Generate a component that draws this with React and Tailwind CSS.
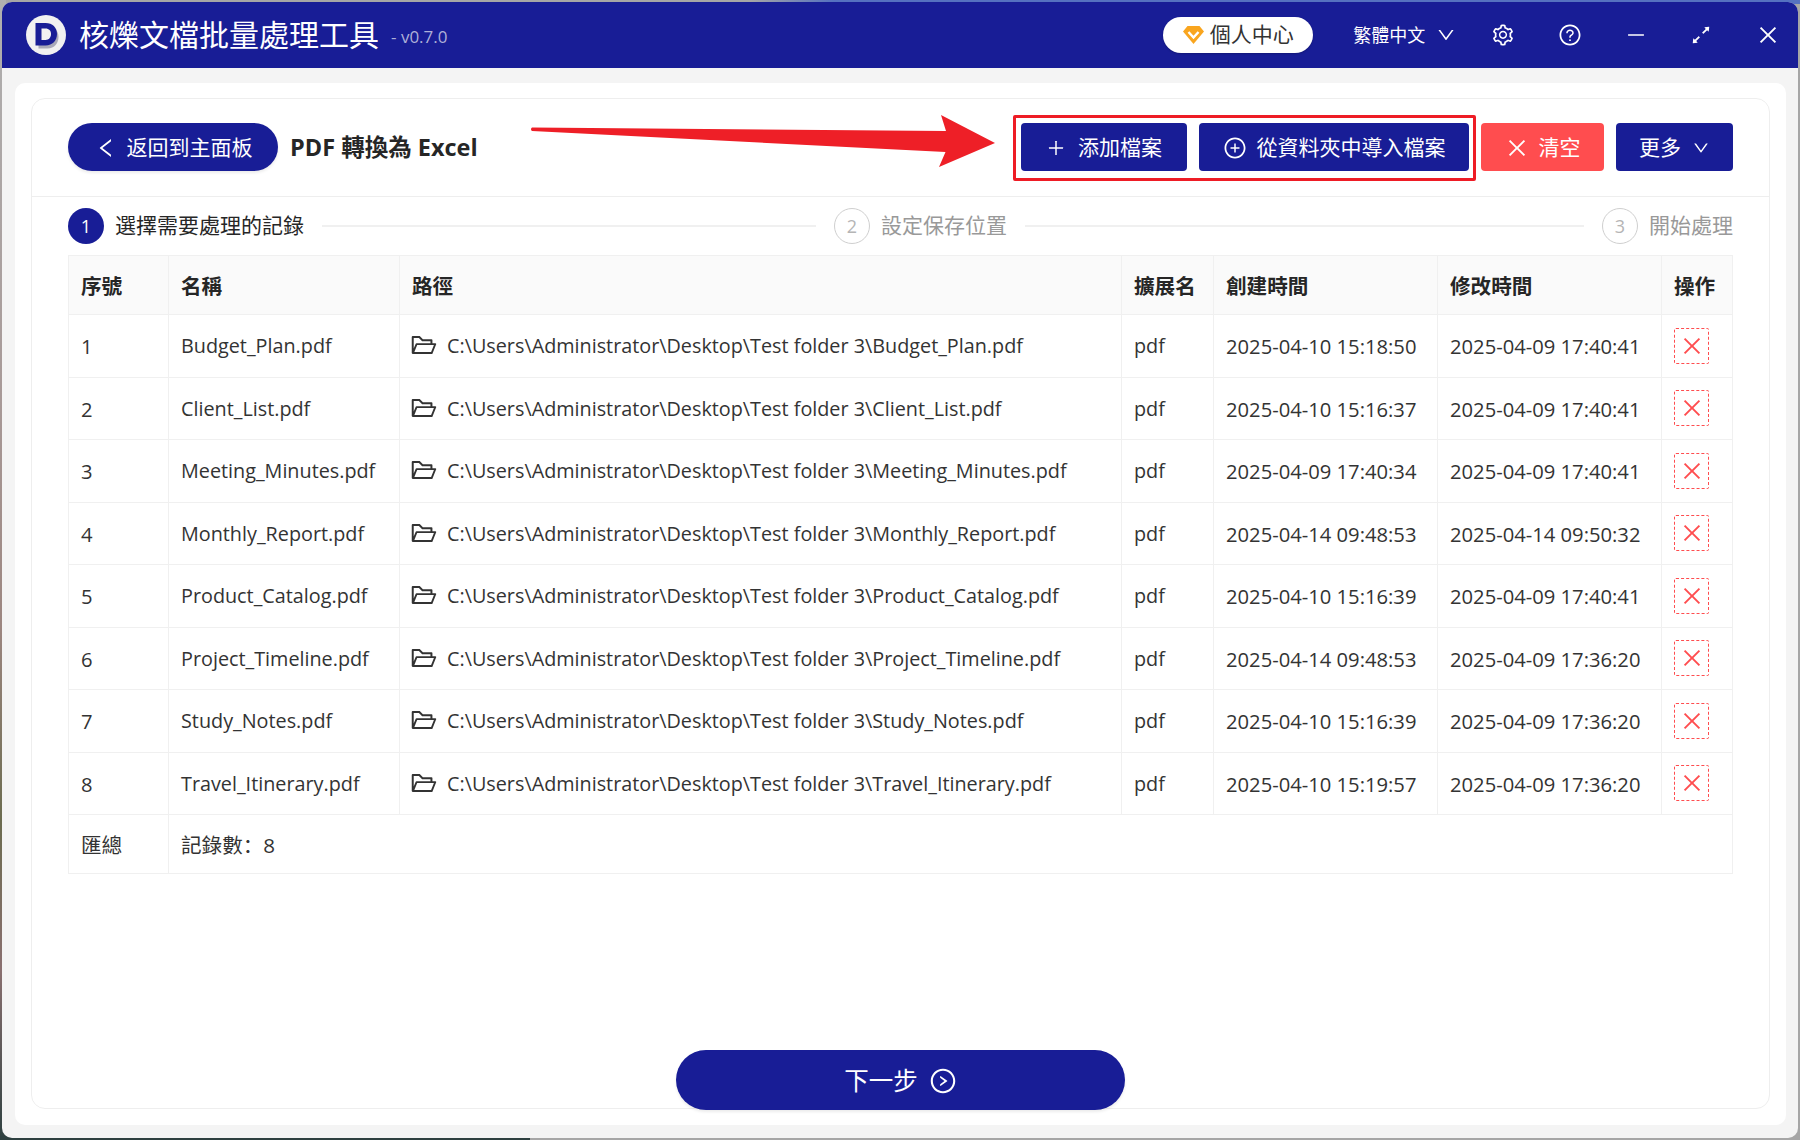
import React from "react";
import {
  AiOutlineFolderOpen, AiOutlinePlus, AiOutlineClose, AiOutlinePlusCircle, AiOutlineDown, AiOutlineLeft,
  AiOutlineSetting, AiOutlineQuestionCircle, AiOutlineMinus, AiOutlineArrowsAlt, AiOutlineRightCircle,
} from "react-icons/ai";

const rows = [
  ["1", "Budget_Plan.pdf", "2025-04-10 15:18:50", "2025-04-09 17:40:41"],
  ["2", "Client_List.pdf", "2025-04-10 15:16:37", "2025-04-09 17:40:41"],
  ["3", "Meeting_Minutes.pdf", "2025-04-09 17:40:34", "2025-04-09 17:40:41"],
  ["4", "Monthly_Report.pdf", "2025-04-14 09:48:53", "2025-04-14 09:50:32"],
  ["5", "Product_Catalog.pdf", "2025-04-10 15:16:39", "2025-04-09 17:40:41"],
  ["6", "Project_Timeline.pdf", "2025-04-14 09:48:53", "2025-04-09 17:36:20"],
  ["7", "Study_Notes.pdf", "2025-04-10 15:16:39", "2025-04-09 17:36:20"],
  ["8", "Travel_Itinerary.pdf", "2025-04-10 15:19:57", "2025-04-09 17:36:20"],
];

function Logo() {
  return (
    <svg width="40" height="40" viewBox="0 0 40 40" className="shrink-0">
      <circle cx="20" cy="20" r="20" fill="#f1f1f1" />
      <path d="M11 9h9c7 0 11 4.500 11 10.500S27 31 20 31h-9z" fill="#a9a9b8" transform="translate(1.500 2.500)" />
      <path d="M9.500 8h10c7 0 11.500 4.500 11.500 11s-4.500 11.500-11.500 11.500h-10z" fill="#181d96" />
      <path d="M15.500 13.500h4c3.500 0 5.500 2.300 5.500 5.500s-2 6-5.500 6h-4z" fill="#f1f1f1" />
    </svg>
  );
}

function Diamond() {
  return (
    <svg width="21" height="18" viewBox="0 0 21 18" className="shrink-0">
      <path d="M4.500 0h12L21 5.500 10.500 18 0 5.500z" fill="#f9a51e" />
      <path d="M5.500 6l5 5.500 5-5.500" fill="none" stroke="#fff" strokeWidth="2.400" />
    </svg>
  );
}

function Step({ n, label, active }) {
  return (
    <div className="flex items-center gap-[11px] shrink-0">
      <span className={active
        ? "w-[36px] h-[36px] rounded-full bg-[#181d96] text-white text-[18px] flex items-center justify-center"
        : "w-[36px] h-[36px] rounded-full border border-[#cfcfcf] text-[#b5b5b5] text-[18px] flex items-center justify-center"}>
        {n}
      </span>
      <span className={active ? "text-[21px] text-[#262626]" : "text-[21px] text-[#999999]"}>{label}</span>
    </div>
  );
}

function Th({ children }) {
  return <th className="h-[59px] px-[12px] pt-[3px] bg-[#fafafa] border-r border-b border-[#f0f0f0] text-left text-[20.600px] font-bold text-[#262626] whitespace-nowrap">{children}</th>;
}

function Td({ children, size }) {
  return <td className={"h-[62.500px] px-[12px] pt-[1px] border-r border-b border-[#f0f0f0] whitespace-nowrap " + (size === "date" ? "text-[20.200px]" : "text-[19.800px]")}>{children}</td>;
}

export default function App() {
  return (
    <div className="relative w-[1800px] h-[1140px] overflow-hidden bg-[#a6a6a6] font-['Open_Sans','Noto_Sans_CJK_SC',sans-serif]">
      {/* desktop peeking out behind the window */}
      <div className="absolute left-0 top-0 bottom-0 w-[6px] bg-[linear-gradient(to_bottom,#b0b0b0_0%,#a89a98_35%,#9c8680_55%,#6c6c50_72%,#8a7070_85%,#2e4040_100%)]" />
      <div className="absolute left-0 bottom-0 h-[4px] w-[530px] bg-[#2e4040]" />
      <div className="absolute right-0 top-0 h-[4px] w-[1050px] bg-[linear-gradient(to_right,#a6a6a6,#5571c0_8%)]" />

      <div className="absolute left-[2px] top-[2px] w-[1796px] h-[1136px] rounded-[10px] overflow-hidden flex flex-col bg-[#f4f4f4]">
        <header className="h-[66px] shrink-0 bg-[#181d96] flex items-center pl-[24px] pr-[18px] text-white">
          <Logo />
          <span className="ml-[13px] text-[30px] leading-none">核爍文檔批量處理工具</span>
          <span className="ml-[12px] mt-[3px] text-[17px] text-[#aeb0d8]">- v0.7.0</span>
          <div className="ml-auto mr-[40px] w-[150px] h-[36px] rounded-full bg-white flex items-center justify-center gap-[6px] text-[21px] text-[#333333] shadow-[0_1px_2px_rgba(0,0,0,0.2)]">
            <Diamond />
            <span>個人中心</span>
          </div>
          <div className="flex items-center gap-[11px] text-[18px] mr-[35px]">
            <span>繁體中文</span>
            <AiOutlineDown size={20} />
          </div>
          <div className="flex items-center gap-[42.700px]">
            <AiOutlineSetting size={24} />
            <AiOutlineQuestionCircle size={24} />
            <AiOutlineMinus size={22} />
            <AiOutlineArrowsAlt size={24} />
            <AiOutlineClose size={24} />
          </div>
        </header>

        <main className="flex-1 min-h-0 flex px-[13px] pt-[15px] pb-[13px]">
          <div className="flex-1 flex px-[16px] pt-[15px] pb-[16px] bg-white rounded-[10px]">
            <div className="flex-1 flex flex-col border border-[#eeeeee] rounded-[14px]">
              <div className="h-[98px] shrink-0 px-[36px] pt-[24px] flex items-start border-b border-[#eeeeee]">
                <button className="h-[48px] w-[210px] pt-[1px] rounded-full bg-[#181d96] text-white text-[21px] flex items-center justify-center gap-[9px] shadow-[0_2px_3px_rgba(0,0,0,0.08)]">
                  <AiOutlineLeft size={24} />
                  <span>返回到主面板</span>
                </button>
                <span className="ml-[12px] h-[48px] pt-[2px] flex items-center text-[23.500px] font-bold text-[#262626]">PDF 轉換為 Excel</span>
                <div className="ml-auto flex gap-[12px]">
                  <button className="h-[48px] w-[166px] pt-[2px] rounded-[4px] bg-[#181d96] text-white text-[21px] flex items-center justify-center gap-[12px]">
                    <AiOutlinePlus size={20} />
                    <span>添加檔案</span>
                  </button>
                  <button className="h-[48px] w-[270px] pt-[2px] rounded-[4px] bg-[#181d96] text-white text-[21px] flex items-center justify-center gap-[10px]">
                    <AiOutlinePlusCircle size={24} />
                    <span>從資料夾中導入檔案</span>
                  </button>
                  <button className="h-[48px] w-[123px] pt-[2px] rounded-[4px] bg-[#ff4d4f] text-white text-[21px] flex items-center justify-center gap-[10px]">
                    <AiOutlineClose size={24} />
                    <span>清空</span>
                  </button>
                  <button className="h-[48px] w-[117px] pt-[2px] rounded-[4px] bg-[#181d96] text-white text-[21px] flex items-center justify-center gap-[11px]">
                    <span>更多</span>
                    <AiOutlineDown size={18} />
                  </button>
                </div>
              </div>

              <div className="shrink-0 px-[36px] mt-[11px] flex items-center">
                <Step n="1" label="選擇需要處理的記錄" active />
                <div className="w-[494px] h-[2px] bg-[#f0f0f0] mx-[18px]" />
                <Step n="2" label="設定保存位置" />
                <div className="flex-1 h-[2px] bg-[#f0f0f0] mx-[18px]" />
                <Step n="3" label="開始處理" />
              </div>

              <div className="shrink-0 px-[36px] mt-[11px]">
                <table className="w-[1665px] table-fixed border-separate border-spacing-0 border-l border-t border-[#f0f0f0] text-[20.600px] text-[#333333]">
                  <colgroup>
                    <col className="w-[100px]" />
                    <col className="w-[231px]" />
                    <col className="w-[722px]" />
                    <col className="w-[92px]" />
                    <col className="w-[224px]" />
                    <col className="w-[224px]" />
                    <col />
                  </colgroup>
                  <thead>
                    <tr>
                      <Th>序號</Th><Th>名稱</Th><Th>路徑</Th><Th>擴展名</Th><Th>創建時間</Th><Th>修改時間</Th><Th>操作</Th>
                    </tr>
                  </thead>
                  <tbody>
                    {rows.map((r) => (
                      <tr key={r[0]}>
                        <Td size="date">{r[0]}</Td>
                        <Td>{r[1]}</Td>
                        <Td>
                          <div className="flex items-center gap-[9px] -ml-[2px]">
                            <AiOutlineFolderOpen size={28} className="shrink-0 text-[#333333] -translate-y-[1px]" />
                            <span>{"C:\\Users\\Administrator\\Desktop\\Test folder 3\\" + r[1]}</span>
                          </div>
                        </Td>
                        <Td>pdf</Td>
                        <Td size="date">{r[2]}</Td>
                        <Td size="date">{r[3]}</Td>
                        <td className="h-[62.500px] px-[12px] border-r border-b border-[#f0f0f0]">
                          <button className="w-[35px] h-[36px] border border-dashed border-[#ff4d4f] rounded-[2px] flex items-center justify-center text-[#ff4d4f]">
                            <AiOutlineClose size={24} />
                          </button>
                        </td>
                      </tr>
                    ))}
                    <tr>
                      <td className="h-[59px] px-[12px] pt-[2px] border-r border-b border-[#f0f0f0]">匯總</td>
                      <td colSpan={6} className="h-[59px] px-[12px] pt-[2px] border-r border-b border-[#f0f0f0]">記錄數：8</td>
                    </tr>
                  </tbody>
                </table>
              </div>

              <div className="mt-auto -mb-[2px] flex justify-center">
                <button className="w-[449px] h-[60px] pt-[2px] rounded-[30px] bg-[#181d96] text-white text-[24.500px] flex items-center justify-center gap-[11px] shadow-[0_2px_3px_rgba(0,0,0,0.08)]">
                  <span>下一步</span>
                  <AiOutlineRightCircle size={28} />
                </button>
              </div>
            </div>
          </div>
        </main>
      </div>

      {/* hand-drawn annotation over the screenshot */}
      <div className="absolute left-[1013px] top-[115px] w-[463px] h-[66px] border-[3px] border-[#ee1c25] rounded-[2px]" />
      <svg className="absolute left-0 top-0" width="1800" height="200" viewBox="0 0 1800 200">
        <path d="M532 127.500L946 131L941 115L995 143L939 167L945.500 152L532 131Q530 129 532 127.500z" fill="#ee1f27" />
      </svg>
    </div>
  );
}
